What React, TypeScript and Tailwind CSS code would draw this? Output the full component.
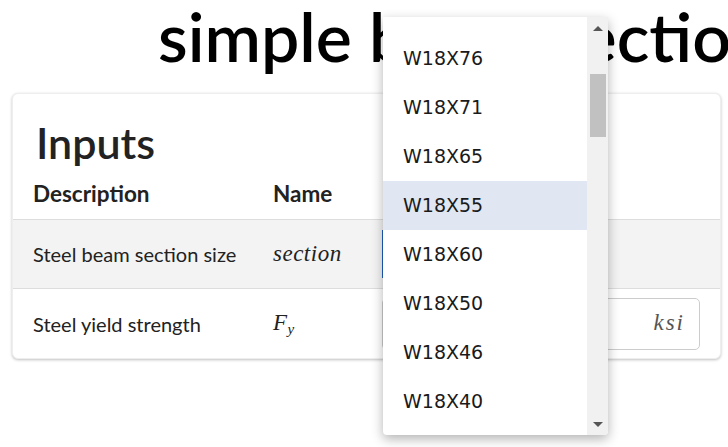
const sizes = ["W18X86", "W18X76", "W18X71", "W18X65", "W18X55", "W18X60", "W18X50", "W18X46", "W18X40", "W18X35"];

const Math = ({ children, className = "" }: { children: React.ReactNode; className?: string }) => (
  <span
    className={`italic text-[23px] tracking-[0.5px] text-[#222] ${className}`}
    style={{ fontFamily: '"Liberation Serif", "DejaVu Serif", serif' }}
  >
    {children}
  </span>
);

const Dropdown = () => (
  <div className="absolute left-[383px] top-[17px] w-[225px] h-[418px] bg-white rounded-b-[4px] shadow-[0_4px_12px_rgba(0,0,0,0.3)] flex overflow-hidden">
    <div className="flex-1 overflow-hidden">
      <ul className="mt-[-32px]" style={{ fontFamily: '"DejaVu Sans", sans-serif' }}>
        {sizes.map((s) => (
          <li
            key={s}
            className={`h-[49px] flex items-center pl-[20px] text-[19px] text-[#1a1a1a] ${s === "W18X55" ? "bg-[#e0e7f3]" : ""}`}
          >
            {s}
          </li>
        ))}
      </ul>
    </div>
    <div className="w-[21px] bg-[#f1f1f1] flex flex-col items-center">
      <div className="h-[22px] flex items-center justify-center">
        <div className="w-0 h-0 border-l-[5px] border-r-[5px] border-b-[5px] border-l-transparent border-r-transparent border-b-[#555]" />
      </div>
      <div className="mt-[35px] w-[16px] h-[63px] bg-[#c1c1c1]" />
      <div className="flex-1" />
      <div className="h-[22px] flex items-center justify-center">
        <div className="w-0 h-0 border-l-[5px] border-r-[5px] border-t-[5px] border-l-transparent border-r-transparent border-t-[#555]" />
      </div>
    </div>
  </div>
);

export default function App() {
  return (
    <div className="relative w-[728px] h-[447px] overflow-hidden bg-white" style={{ fontFamily: 'Lato, "Noto Sans", sans-serif' }}>
      <h1 className="pl-[158px] h-[81px] whitespace-nowrap text-[68px] leading-[72px] font-semibold text-black">
        simple beam section
      </h1>
      <div className="ml-[12px] mt-[12px] w-[709px] bg-white rounded-[6px] border border-[#eee] shadow-[0_1px_3px_rgba(0,0,0,0.25)] overflow-hidden">
        <h2 className="pl-[23px] pt-[27px] text-[43px] leading-[44px] font-semibold text-[#222]">Inputs</h2>
        <div className="grid grid-cols-[240px_109px_1fr] px-[20px] h-[54px] items-center text-[#222]">
          <div className="font-bold text-[22.5px] pt-[3px]">Description</div>
          <div className="font-bold text-[22.5px] pt-[3px]">Name</div>
          <div />
        </div>
        <div className="border-t border-[#ddd] bg-[#f3f3f3] grid grid-cols-[240px_109px_1fr] px-[20px] h-[69px] items-center text-[20px] text-[#222]">
          <div>Steel beam section size</div>
          <div>
            <Math>section</Math>
          </div>
          <div className="h-[48px] w-[200px] border-l-2 border-[#1d5fbf] bg-white" />
        </div>
        <div className="border-t border-[#ddd] grid grid-cols-[240px_109px_1fr] px-[20px] h-[70px] items-center text-[20px] text-[#222]">
          <div>Steel yield strength</div>
          <div>
            <Math>
              F<sub className="text-[15px]">y</sub>
            </Math>
          </div>
          <div className="h-[52px] border border-[#ccc] rounded-[5px] flex items-center justify-end pr-[14px]">
            <Math className="tracking-[2px] text-[#555]">ksi</Math>
          </div>
        </div>
      </div>
      <Dropdown />
    </div>
  );
}
